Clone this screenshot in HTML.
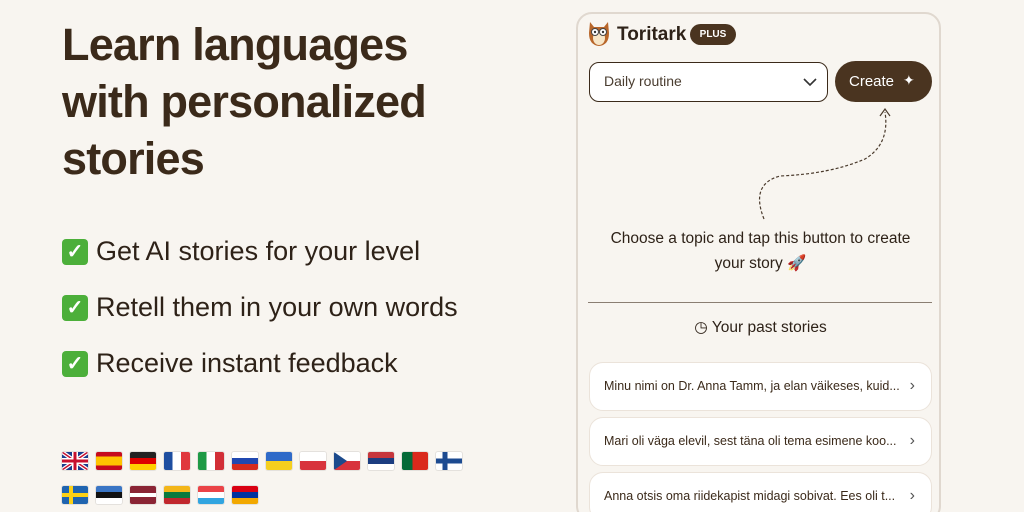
<!DOCTYPE html>
<html style="width:1024px;height:512px;overflow:hidden"><head><meta charset="utf-8"><style>
*{margin:0;padding:0;box-sizing:border-box}
body{width:1024px;height:512px;overflow:hidden;background:#f8f5f0;font-family:"Liberation Sans",sans-serif;color:#3b2a1a;position:relative}
h1{position:absolute;left:62px;top:16px;font-size:45px;line-height:57px;font-weight:bold;letter-spacing:-0.8px;color:#3b2a1a}
.b{position:absolute;left:62px;font-size:27px;display:flex;align-items:center;color:#2e2218}
.ck{width:26px;height:26px;background:#4caf3a;border-radius:4px;margin-right:8px;color:#fff;font-size:20px;font-weight:bold;display:flex;align-items:center;justify-content:center}
.f{position:absolute;width:26px;height:18px;border-radius:2px;overflow:hidden;box-shadow:0 0 0 1px rgba(0,0,0,.08)}
.card{position:absolute;left:576px;top:12px;width:365px;height:510px;border:2px solid #e0d8cf;border-radius:16px;background:#f8f5f0}
.sel{position:absolute;left:589px;top:62px;width:239px;height:40px;border:1.5px solid #3b2a1a;border-radius:10px;background:#fff;font-size:14px;padding:10px 14px;color:#4a3d30}
.btn{position:absolute;left:835px;top:61px;width:97px;height:41px;border-radius:21px;background:#4a3420;color:#fff;font-size:15px;padding:12px 0 0 14px}
.it{position:absolute;left:589px;width:343px;height:49px;border:1.5px solid #ebe3da;border-radius:14px;background:#fff;font-size:12.5px;padding:16px 14px;color:#3b2a1a}
.it span{position:absolute;right:16px;top:14px;font-size:16px;color:#555}
</style></head><body>
<h1>Learn languages<br>with personalized<br>stories</h1>
<div class="b" style="top:236px"><div class="ck">✓</div>Get AI stories for your level</div>
<div class="b" style="top:292px"><div class="ck">✓</div>Retell them in your own words</div>
<div class="b" style="top:348px"><div class="ck">✓</div>Receive instant feedback</div>

<div class="f" style="left:62px;top:452px;background:#1a3c8c"><svg width="26" height="18"><path d="M0 0L26 18M26 0L0 18" stroke="#fff" stroke-width="4"/><path d="M0 0L26 18M26 0L0 18" stroke="#c8102e" stroke-width="1.5"/><path d="M13 0V18M0 9H26" stroke="#fff" stroke-width="6"/><path d="M13 0V18M0 9H26" stroke="#c8102e" stroke-width="3"/></svg></div>
<div class="f" style="left:96px;top:452px;background:linear-gradient(#c60b1e 25%,#ffc400 25% 75%,#c60b1e 75%)"></div>
<div class="f" style="left:130px;top:452px;background:linear-gradient(#222 33%,#dd0000 33% 66%,#ffce00 66%)"></div>
<div class="f" style="left:164px;top:452px;background:linear-gradient(90deg,#1e4ea0 33%,#fff 33% 66%,#e0383e 66%)"></div>
<div class="f" style="left:198px;top:452px;background:linear-gradient(90deg,#1e9a46 33%,#fff 33% 66%,#d22f37 66%)"></div>
<div class="f" style="left:232px;top:452px;background:linear-gradient(#fff 33%,#2048b0 33% 66%,#d52b1e 66%)"></div>
<div class="f" style="left:266px;top:452px;background:linear-gradient(#2f6ac8 50%,#f5cf1e 50%)"></div>
<div class="f" style="left:300px;top:452px;background:linear-gradient(#fff 50%,#d8333c 50%)"></div>
<div class="f" style="left:334px;top:452px;background:linear-gradient(#fff 50%,#d8333c 50%)"><svg width="26" height="18"><path d="M0 0L13 9L0 18Z" fill="#1c4a8c"/></svg></div>
<div class="f" style="left:368px;top:452px;background:linear-gradient(#c6363c 33%,#1c3d80 33% 66%,#fff 66%)"></div>
<div class="f" style="left:402px;top:452px;background:linear-gradient(90deg,#046a38 40%,#da291c 40%)"></div>
<div class="f" style="left:436px;top:452px;background:#fff"><svg width="26" height="18"><path d="M9 0V18M0 9H26" stroke="#1c4a90" stroke-width="5"/></svg></div>
<div class="f" style="left:62px;top:486px;background:#1f64b0"><svg width="26" height="18"><path d="M9 0V18M0 9H26" stroke="#fcd116" stroke-width="4"/></svg></div>
<div class="f" style="left:96px;top:486px;background:linear-gradient(#3a75c4 33%,#111 33% 66%,#fff 66%)"></div>
<div class="f" style="left:130px;top:486px;background:linear-gradient(#8a2434 40%,#fff 40% 60%,#8a2434 60%)"></div>
<div class="f" style="left:164px;top:486px;background:linear-gradient(#f3b619 33%,#0a7a3e 33% 66%,#c1272d 66%)"></div>
<div class="f" style="left:198px;top:486px;background:linear-gradient(#ea4347 33%,#fff 33% 66%,#31a5e0 66%)"></div>
<div class="f" style="left:232px;top:486px;background:linear-gradient(#d90012 33%,#0033a0 33% 66%,#f2a800 66%)"></div>

<div class="card"></div>
<svg style="position:absolute;left:587px;top:21px" width="24" height="26" viewBox="0 0 24 26"><path d="M3 1L7 6H17L21 1L22 12Q22 24 12 25Q2 24 2 12Z" fill="#b8662a"/><ellipse cx="12" cy="17" rx="6" ry="7" fill="#f7e6c8"/><circle cx="8" cy="11" r="3.5" fill="#fff" stroke="#444"/><circle cx="16" cy="11" r="3.5" fill="#fff" stroke="#444"/><circle cx="8" cy="11" r="1.2" fill="#333"/><circle cx="16" cy="11" r="1.2" fill="#333"/></svg>
<div style="position:absolute;left:617px;top:24px;font-size:19px;font-weight:bold;color:#2e2218">Toritark</div>
<div style="position:absolute;left:690px;top:24px;width:46px;height:21px;border-radius:11px;background:#4a3420;color:#fff;font-size:10px;font-weight:bold;text-align:center;line-height:21px">PLUS</div>
<div class="sel">Daily routine<svg style="position:absolute;right:10px;top:15px" width="14" height="9"><path d="M1 1L7 7L13 1" stroke="#333" stroke-width="1.6" fill="none"/></svg></div>
<div class="btn">Create<span style="position:absolute;left:68px;top:11px;font-size:14px">✦</span></div>
<svg style="position:absolute;left:750px;top:104px" width="150" height="120"><path d="M14 115Q0 80 30 72Q80 70 115 55Q140 40 135 8" stroke="#4a3a2c" stroke-width="1.2" fill="none" stroke-dasharray="3 2"/><path d="M130 12L135 5L140 12" stroke="#4a3a2c" stroke-width="1.2" fill="none"/></svg>
<div style="position:absolute;left:589px;top:226px;width:343px;text-align:center;font-size:15.5px;line-height:25px;color:#2e2218">Choose a topic and tap this button to create<br>your story 🚀</div>
<div style="position:absolute;left:588px;top:302px;width:344px;height:1px;background:#8a7e72"></div>
<div style="position:absolute;left:589px;top:318px;width:343px;text-align:center;font-size:15.5px;color:#2e2218">◷ Your past stories</div>
<div class="it" style="top:362px">Minu nimi on Dr. Anna Tamm, ja elan väikeses, kuid...<span>›</span></div>
<div class="it" style="top:417px">Mari oli väga elevil, sest täna oli tema esimene koo...<span>›</span></div>
<div class="it" style="top:472px">Anna otsis oma riidekapist midagi sobivat. Ees oli t...<span>›</span></div>
</body></html>
